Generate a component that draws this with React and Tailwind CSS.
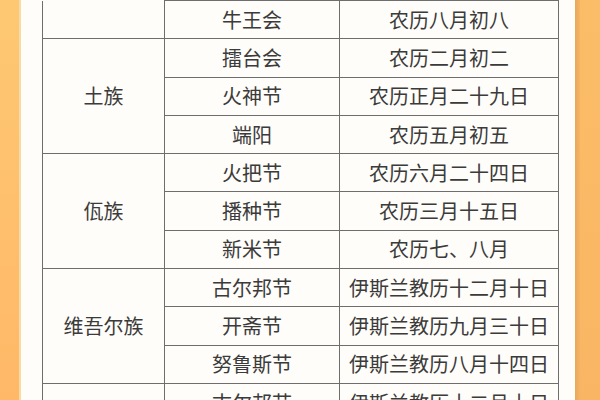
const groups = [
  {
    name: "",
    cont: true,
    rows: [["牛王会", "农历八月初八"]],
  },
  {
    name: "土族",
    rows: [
      ["擂台会", "农历二月初二"],
      ["火神节", "农历正月二十九日"],
      ["端阳", "农历五月初五"],
    ],
  },
  {
    name: "佤族",
    rows: [
      ["火把节", "农历六月二十四日"],
      ["播种节", "农历三月十五日"],
      ["新米节", "农历七、八月"],
    ],
  },
  {
    name: "维吾尔族",
    rows: [
      ["古尔邦节", "伊斯兰教历十二月十日"],
      ["开斋节", "伊斯兰教历九月三十日"],
      ["努鲁斯节", "伊斯兰教历八月十四日"],
    ],
  },
  {
    name: "",
    rows: [["古尔邦节", "伊斯兰教历十二月十日"]],
  },
];

export default function App() {
  return (
    <div
      className="flex h-[400px] w-[600px] overflow-hidden bg-[#fdc36e] text-[#3b3b3b]"
      style={{ fontFamily: '"Noto Sans CJK SC", "Noto Sans", sans-serif' }}
    >
      {/* left orange strip */}
      <div className="w-[19px] shrink-0 bg-gradient-to-b from-[#fec872] to-[#ffb867]" />
      <div className="w-[2px] shrink-0 bg-[#f5dca6]" />

      {/* white sheet */}
      <div className="w-[554px] shrink-0 bg-[#fffdf9] pl-[21px]">
        <table className="w-[516px] table-fixed border-collapse text-[20px] leading-none">
          <colgroup>
            <col className="w-[122px]" />
            <col className="w-[175px]" />
            <col className="w-[219px]" />
          </colgroup>
          <tbody>
            {groups.map((g, gi) =>
              g.rows.map((r, ri) => (
                <tr key={gi + "-" + ri} className="h-[38.3px]">
                  {ri === 0 && (
                    <td
                      rowSpan={g.rows.length}
                      className={`border-x border-[#6e6e6e] text-center align-middle ${
                        g.cont ? "" : "border-t"
                      }`}
                    >
                      {g.name}
                    </td>
                  )}
                  <td className="border border-[#6e6e6e] text-center align-middle">{r[0]}</td>
                  <td className="border border-[#6e6e6e] text-center align-middle">{r[1]}</td>
                </tr>
              ))
            )}
          </tbody>
        </table>
      </div>

      {/* right orange edge */}
      <div className="w-[5px] shrink-0 bg-gradient-to-r from-[#e7a75c] to-[#f6b465]" />
      <div className="flex-1 bg-gradient-to-b from-[#fbbd68] to-[#f9b563]" />
    </div>
  );
}
